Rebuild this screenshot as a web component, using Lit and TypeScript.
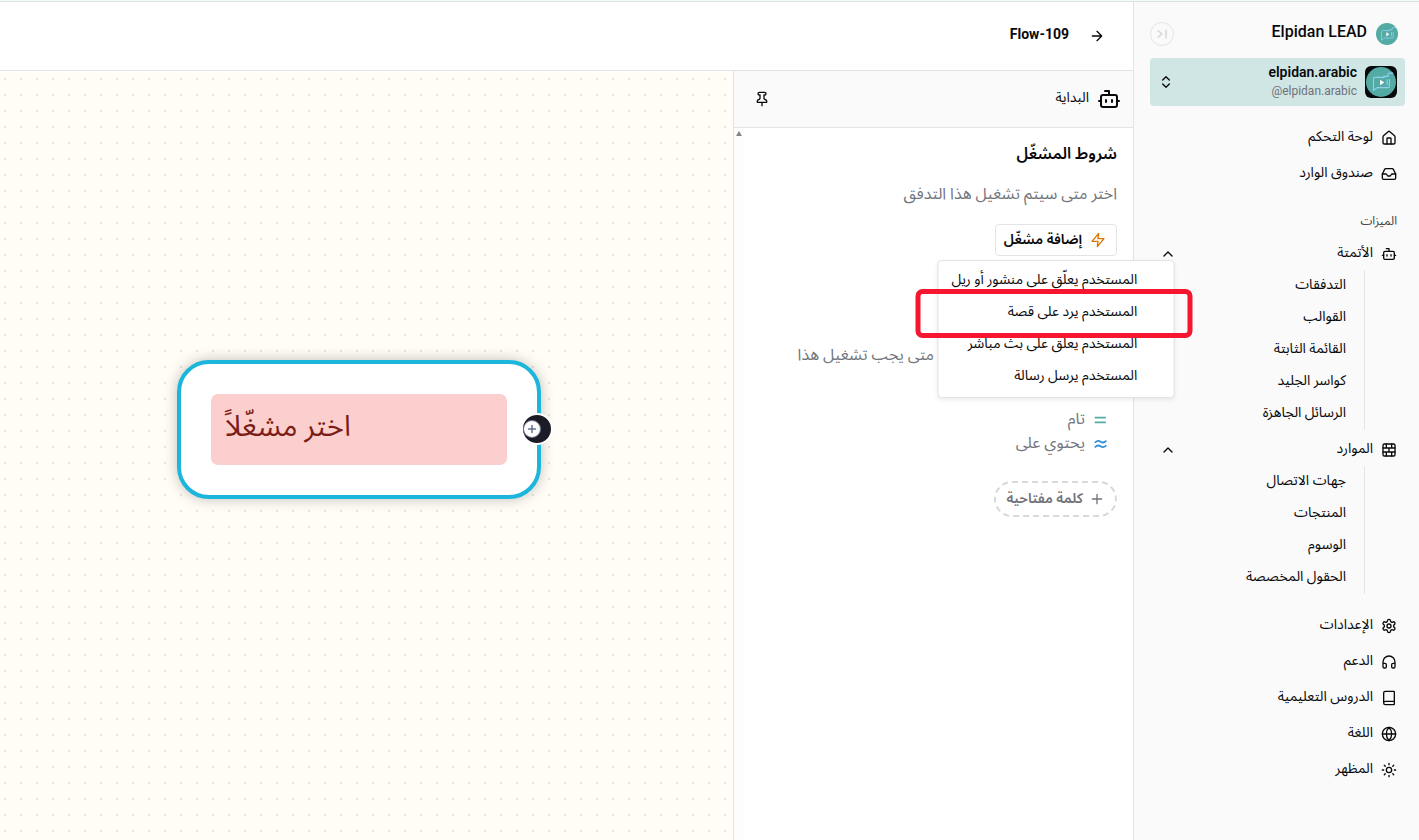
import { LitElement, html, css, svg } from "lit";
import { customElement, property } from "lit/decorators.js";

const icons: Record<string, unknown> = {
  home: svg`<path d="M15 21v-8a1 1 0 0 0-1-1h-4a1 1 0 0 0-1 1v8"/><path d="M3 10a2 2 0 0 1 .709-1.528l7-5.999a2 2 0 0 1 2.582 0l7 5.999A2 2 0 0 1 21 10v9a2 2 0 0 1-2 2H5a2 2 0 0 1-2-2z"/>`,
  inbox: svg`<path d="M22 12h-6l-2 3h-4l-2-3H2"/><path d="M5.45 5.11 2 12v6a2 2 0 0 0 2 2h16a2 2 0 0 0 2-2v-6l-3.45-6.89A2 2 0 0 0 16.76 4H7.24a2 2 0 0 0-1.79 1.11z"/>`,
  bot: svg`<path d="M12 8V4H8"/><rect width="16" height="12" x="4" y="8" rx="2"/><path d="M2 14h2M20 14h2M15 13v2M9 13v2"/>`,
  bricks: svg`<rect width="18" height="18" x="3" y="3" rx="2"/><path d="M12 9v6M16 15v6M16 3v6M3 15h18M3 9h18M8 15v6M8 3v6"/>`,
  gear: svg`<path d="M12.22 2h-.44a2 2 0 0 0-2 2v.18a2 2 0 0 1-1 1.73l-.43.25a2 2 0 0 1-2 0l-.15-.08a2 2 0 0 0-2.73.73l-.22.38a2 2 0 0 0 .73 2.73l.15.1a2 2 0 0 1 1 1.72v.51a2 2 0 0 1-1 1.74l-.15.09a2 2 0 0 0-.73 2.73l.22.38a2 2 0 0 0 2.73.73l.15-.08a2 2 0 0 1 2 0l.43.25a2 2 0 0 1 1 1.73V20a2 2 0 0 0 2 2h.44a2 2 0 0 0 2-2v-.18a2 2 0 0 1 1-1.73l.43-.25a2 2 0 0 1 2 0l.15.08a2 2 0 0 0 2.73-.73l.22-.39a2 2 0 0 0-.73-2.73l-.15-.08a2 2 0 0 1-1-1.74v-.5a2 2 0 0 1 1-1.74l.15-.09a2 2 0 0 0 .73-2.73l-.22-.38a2 2 0 0 0-2.73-.73l-.15.08a2 2 0 0 1-2 0l-.43-.25a2 2 0 0 1-1-1.73V4a2 2 0 0 0-2-2z"/><circle cx="12" cy="12" r="3"/>`,
  headphones: svg`<path d="M3 14h3a2 2 0 0 1 2 2v3a2 2 0 0 1-2 2H5a2 2 0 0 1-2-2v-7a9 9 0 0 1 18 0v7a2 2 0 0 1-2 2h-1a2 2 0 0 1-2-2v-3a2 2 0 0 1 2-2h3"/>`,
  book: svg`<path d="M4 19.500v-15A2.500 2.500 0 0 1 6.500 2H19a1 1 0 0 1 1 1v18a1 1 0 0 1-1 1H6.500a1 1 0 0 1 0-5H20"/>`,
  globe: svg`<circle cx="12" cy="12" r="10"/><path d="M12 2a14.500 14.500 0 0 0 0 20 14.500 14.500 0 0 0 0-20M2 12h20"/>`,
  sun: svg`<circle cx="12" cy="12" r="4"/><path d="M12 2v2M12 20v2M4.930 4.930l1.410 1.410M17.660 17.660l1.410 1.410M2 12h2M20 12h2M6.340 17.660l-1.410 1.410M19.070 4.930l-1.410 1.410"/>`,
  up: svg`<path d="m18 15-6-6-6 6"/>`,
  updown: svg`<path d="m7 15 5 5 5-5M7 9l5-5 5 5"/>`,
  collapse: svg`<path d="m6 17 6-5-6-5M18 6v12"/>`,
  arrow: svg`<path d="M5 12h14M12 5l7 7-7 7"/>`,
  pin: svg`<path d="M12 17v5M5 17h14v-1.760a2 2 0 0 0-1.110-1.790l-1.780-.900A2 2 0 0 1 15 10.760V6h1a2 2 0 0 0 0-4H8a2 2 0 0 0 0 4h1v4.760a2 2 0 0 1-1.110 1.790l-1.780.900A2 2 0 0 0 5 15.240Z"/>`,
  zap: svg`<path d="M13 2 3 14h9l-1 8 10-12h-9l1-8z"/>`,
  plus: svg`<path d="M5 12h14M12 5v14"/>`,
  equal: svg`<path stroke-linecap="butt" d="M3 8h19M3 16h19"/>`,
  approx: svg`<path d="M4 9c3-3 6-3 9-1s6 2 9-1M4 17c3-3 6-3 9-1s6 2 9-1"/>`,
};

@customElement("ui-icon")
class UiIcon extends LitElement {
  @property() name = "";
  @property({ type: Number }) size = 16;
  @property({ type: Number }) weight = 2;
  static styles = css`
    :host { display: flex; flex: none; }
    svg { display: block; fill: none; stroke: currentColor; stroke-linecap: round; stroke-linejoin: round; }
  `;
  render() {
    return html`<svg viewBox="0 0 24 24" width=${this.size} height=${this.size} stroke-width=${this.weight} aria-hidden="true">${icons[this.name]}</svg>`;
  }
}

@customElement("brand-mark")
class BrandMark extends LitElement {
  @property({ type: Number }) size = 22;
  static styles = css`
    :host { display: flex; flex: none; }
    svg { display: block; }
  `;
  render() {
    return html`<svg viewBox="0 0 32 32" width=${this.size} height=${this.size} aria-hidden="true">
      <circle cx="16" cy="16" r="16" fill="#53aba3"/>
      <path d="M20 11H9.500q-1.500 0-1.500 1.500V25l4-3h11.500q1.500 0 1.500-1.500V13M18 12l1-2h4.500V7.500q0-1 1.500-1h4M22.500 13v6.500" fill="none" stroke="#8fd0f0" stroke-width="1.200"/>
      <path d="m15 13.500 4.500 3-4.500 3z" fill="#fff"/>
    </svg>`;
  }
}

const mainLinks = [
  ["home", "لوحة التحكم"],
  ["inbox", "صندوق الوارد"],
];
const groups = [
  { icon: "bot", title: "الأتمتة", items: ["التدفقات", "القوالب", "القائمة الثابتة", "كواسر الجليد", "الرسائل الجاهزة"] },
  { icon: "bricks", title: "الموارد", items: ["جهات الاتصال", "المنتجات", "الوسوم", "الحقول المخصصة"] },
];
const footLinks = [
  ["gear", "الإعدادات"],
  ["headphones", "الدعم"],
  ["book", "الدروس التعليمية"],
  ["globe", "اللغة"],
  ["sun", "المظهر"],
];
const triggers = [
  "المستخدم يعلّق على منشور أو ريل",
  "المستخدم يرد على قصة",
  "المستخدم يعلّق على بث مباشر",
  "المستخدم يرسل رسالة",
];

@customElement("app-root")
class AppRoot extends LitElement {
  static styles = css`
    * { box-sizing: border-box; }
    :host {
      display: flex; min-height: 100vh; direction: rtl; box-sizing: border-box; padding-top: 2px;
      background: linear-gradient(#f4faf9 1px, #d9e4e2 1px, #d9e4e2 2px, #fff 2px); color: #09090b;
      font: 14px/20px Roboto, "Noto Sans Arabic", "Noto Sans", "DejaVu Sans", sans-serif;
    }
    a { color: inherit; text-decoration: none; }
    button { font: inherit; color: inherit; background: none; border: 0; padding: 0; margin: 0; cursor: pointer; }
    h2, p, ul { margin: 0; padding: 0; list-style: none; }

    .sidebar { flex: none; width: 286px; background: #fafafa; border-left: 1px solid #e4e4e7; padding: 16px 14px 0 16px; }
    .brand { display: flex; align-items: center; gap: 9px; height: 32px; padding-right: 7px; }
    .brand-name { flex: 1; font-size: 16px; font-weight: 500; line-height: 24px; padding-bottom: 4px; }
    .collapse { width: 24px; height: 24px; border: 1px solid #e4e4e7; border-radius: 50%; color: #d4d4d8; display: flex; align-items: center; justify-content: center; }
    .account { display: flex; align-items: center; gap: 8px; width: 100%; height: 48px; margin-top: 8px; padding: 0 8px; border-radius: 4px; background: #cfe6e4; text-align: right; }
    .avatar { width: 32px; height: 32px; border-radius: 6px; background: #09090b; display: flex; align-items: center; justify-content: center; }
    .who { flex: 1; display: flex; flex-direction: column; padding-bottom: 2px; }
    .who strong { font-weight: 600; line-height: 20px; }
    .who span { font-size: 12px; line-height: 18px; color: #71717a; }
    .links { display: flex; flex-direction: column; gap: 4px; }
    .main { margin-top: 16px; }
    .row { display: flex; align-items: center; gap: 8px; width: 100%; height: 32px; padding: 0 8px 0 6px; text-align: right; }
    .row span { flex: 1; padding-bottom: 4px; }
    .row ui-icon:last-child { padding-left: 4px; }
    .section { margin: 16px 8px 0; height: 32px; line-height: 30px; font-size: 12px; color: #3f3f46; }
    .tree { margin-right: 40px; padding-right: 18px; border-right: 1px solid #e4e4e7; margin-bottom: 4px; }
    .tree a { display: block; line-height: 28px; height: 32px; }
    .foot { margin-top: 16px; }

    .work { flex: 1; min-width: 0; display: flex; flex-direction: column; }
    .topbar { height: 69px; display: flex; align-items: center; gap: 20px; padding: 0 28px; border-bottom: 1px solid #e4e4e7; }
    .topbar span { font-weight: 700; padding-bottom: 4px; }
    .body { flex: 1; display: flex; min-height: 0; }
    .panel { flex: none; width: 400px; border-left: 1px solid #e4e4e7; display: flex; flex-direction: column; }
    .panel-head { height: 57px; display: flex; align-items: center; gap: 8px; padding: 0 12px 0 20px; background: #fafafa; border-bottom: 1px solid #e4e4e7; }
    .panel-head span { flex: 1; padding-bottom: 4px; }
    .pin { width: 16px; height: 16px; }
    .panel-main { flex: 1; display: flex; }
    .track { flex: none; width: 10px; background: #fdfdfb; padding: 3px 2px; }
    .track svg { display: block; }
    .content { flex: 1; padding: 14px 16px; font-size: 16px; line-height: 24px; }
    h2 { font-size: 16px; font-weight: 600; line-height: 24px; }
    .muted { color: #71757c; }
    .lead { margin-top: 16px; }
    .picker { position: relative; width: max-content; margin-top: 18px; }
    .add { display: flex; align-items: center; gap: 8px; height: 32px; padding: 0 10px 0 8px; border: 1px solid #e4e4e7; border-radius: 4px; font-size: 14px; font-weight: 600; }
    .add span, .keyword span { padding-bottom: 2px; }
    .add ui-icon { color: #d97706; }
    .menu { position: absolute; z-index: 2; top: 36px; left: 50%; transform: translateX(-50%); width: 237px; padding: 4px; background: #fff; border: 1px solid #e4e4e7; border-radius: 4px; box-shadow: 0 2px 4px rgba(0,0,0,.08); font-size: 14px; }
    .menu button { display: block; width: 100%; height: 32px; line-height: 28px; padding: 0 32px 4px 8px; text-align: right; white-space: nowrap; }
    .picked { position: relative; }
    .mark { position: absolute; z-index: 3; inset: -8px -23px -9px -27px; border: 5px solid #f6162f; border-radius: 7px; pointer-events: none; }
    .hint { margin: 87px 183px 0 0; }
    .modes { margin-top: 41px; }
    .modes li { display: flex; align-items: center; gap: 8px; padding-right: 10px; height: 24px; }
    .modes span { padding-bottom: 2px; }
    .exact { color: #53aba3; }
    .like { color: #2f8fd8; }
    .keyword { display: flex; align-items: center; gap: 6px; height: 36px; margin-top: 25px; padding: 0 10px; border: 2px dashed #d9d9dc; border-radius: 18px; font-size: 14px; font-weight: 600; color: #71717a; }

    .canvas { flex: 1; min-width: 0; position: relative; direction: ltr; background: conic-gradient(from 0deg at 2px 2px, #0000 75%, #e6e5dd 0) 4px 7px / 16px 16px, #fffdf5; }
    .node { position: absolute; left: 177px; top: 289px; width: 364px; height: 139px; padding: 30px; background: #fff; border: 4px solid #1cb6dc; border-radius: 32px; box-shadow: 0 0 14px rgba(0,0,0,.25); }
    .warning { height: 71px; padding: 10px 14px; background: #fccfcf; border-radius: 7px; font-size: 29px; line-height: 44px; color: #7b1d17; }
    .port { position: absolute; right: -16px; top: 49px; width: 32px; height: 32px; border: 2px solid #fff; border-radius: 50%; background: #1c1c27; display: flex; align-items: center; padding: 0; }
    .port i { display: flex; background: #fff; color: #64748b; border: 1px solid #64748b; border-radius: 50%; padding: 2px; }
  `;

  private row(icon: string, label: string) {
    return html`<a class="row" href="#"><ui-icon name=${icon}></ui-icon><span>${label}</span></a>`;
  }

  render() {
    return html`
      <aside class="sidebar">
        <div class="brand">
          <brand-mark size="22"></brand-mark>
          <span class="brand-name">Elpidan LEAD</span>
          <button class="collapse" aria-label="طي القائمة"><ui-icon name="collapse"></ui-icon></button>
        </div>
        <button class="account">
          <div class="avatar"><brand-mark size="30"></brand-mark></div>
          <div class="who"><strong>elpidan.arabic</strong><span dir="ltr">@elpidan.arabic</span></div>
          <ui-icon name="updown"></ui-icon>
        </button>
        <nav>
          <div class="links main">${mainLinks.map(([i, l]) => this.row(i, l))}</div>
          <div class="section">الميزات</div>
          ${groups.map((g) => html`
            <button class="row"><ui-icon name=${g.icon}></ui-icon><span>${g.title}</span><ui-icon name="up"></ui-icon></button>
            <div class="tree">${g.items.map((t) => html`<a href="#">${t}</a>`)}</div>`)}
          <div class="links foot">${footLinks.map(([i, l]) => this.row(i, l))}</div>
        </nav>
      </aside>
      <div class="work">
        <header class="topbar">
          <button aria-label="رجوع"><ui-icon name="arrow"></ui-icon></button>
          <span>Flow-109</span>
        </header>
        <div class="body">
          <section class="panel">
            <div class="panel-head">
              <ui-icon name="bot" size="24"></ui-icon><span>البداية</span>
              <button class="pin" aria-label="تثبيت"><ui-icon name="pin"></ui-icon></button>
            </div>
            <div class="panel-main">
              <div class="content">
                <h2>شروط المشغّل</h2>
                <p class="muted lead">اختر متى سيتم تشغيل هذا التدفق</p>
                <div class="picker">
                  <button class="add"><ui-icon name="zap"></ui-icon><span>إضافة مشغّل</span></button>
                  <div class="menu">
                    ${triggers.map((t, i) => i === 1
                      ? html`<div class="picked"><button>${t}</button><div class="mark"></div></div>`
                      : html`<button>${t}</button>`)}
                  </div>
                </div>
                <p class="muted hint">متى يجب تشغيل هذا</p>
                <ul class="modes muted">
                  <li><ui-icon class="exact" name="equal" size="14" weight="3"></ui-icon><span>تام</span></li>
                  <li><ui-icon class="like" name="approx" size="14" weight="3"></ui-icon><span>يحتوي على</span></li>
                </ul>
                <button class="keyword"><ui-icon name="plus"></ui-icon><span>كلمة مفتاحية</span></button>
              </div>
              <div class="track"><svg width="6" height="5"><path d="M0 5 3 0l3 5z" fill="#858585"/></svg></div>
            </div>
          </section>
          <main class="canvas">
            <div class="node">
              <div class="warning">اختر مشغّلاً</div>
              <button class="port" aria-label="إضافة خطوة"><i><ui-icon name="plus" size="12" weight="3"></ui-icon></i></button>
            </div>
          </main>
        </div>
      </div>`;
  }
}
